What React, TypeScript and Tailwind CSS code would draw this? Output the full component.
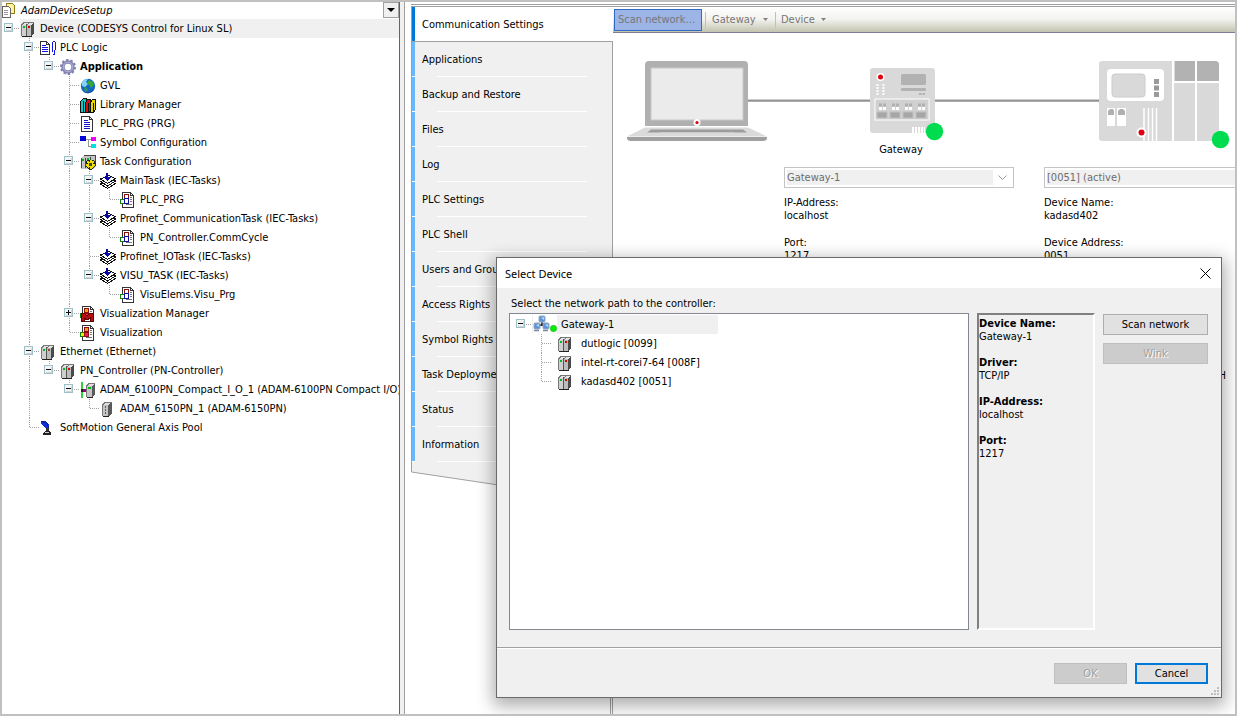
import React from "react";

const UI = "font-['DejaVu_Sans_Condensed','Noto_Sans',sans-serif]";

/* ---------- icons (16 x 16) ---------- */

type IconProps = { children: React.ReactNode; w?: number };

function Svg({ children, w = 16 }: IconProps) {
  return (
    <svg width={w} height="16" viewBox={`0 0 ${w} 16`} className="shrink-0" shapeRendering="crispEdges" aria-hidden="true">
      {children}
    </svg>
  );
}

function DeviceIcon({ red = true }: { red?: boolean }) {
  return (
    <Svg>
      <path d="M1 4l3-3h10v11l-3 3H1z" fill="#e4e4e4" />
      <path d="M11 5l3-4v11l-3 3z" fill="#4a4a4a" />
      <rect x="1" y="4" width="5" height="11" fill="#cfcfcf" />
      <rect x="7" y="4" width="4" height="11" fill="#bdbdbd" />
      <path d="M6.5 3v12" stroke="#555" />
      <path d="M1.5 4v11M4 1.5h10M1 4.5l3-3M7 4l2-2" stroke="#777" fill="none" />
      <path d="M2 15.5h10" stroke="#222" />
      <rect x="3" y="5" width="2" height="2" fill="#00c020" />
      <rect x="8" y="5" width="2" height="2" fill={red ? "#e00000" : "#a04040"} />
    </Svg>
  );
}

function ModuleIcon({ led = "column" }: { led?: "column" | "single" }) {
  return (
    <Svg>
      <path d="M2 4l3-3h7v11l-3 3H2z" fill="#dedede" />
      <path d="M8 5l3-4h1v11l-3 3H8z" fill="#5a5a5a" />
      <rect x="2" y="4" width="6" height="11" fill="#c4c4c4" />
      <path d="M2.5 4v11M5 1.5h7M2 4.5l3-3" stroke="#777" fill="none" />
      <path d="M3 15.5h6" stroke="#222" />
      {led === "column" ? (
        <path d="M5.5 5v9" stroke="#0a9a30" strokeDasharray="2 1" />
      ) : (
        <rect x="4" y="5" width="3" height="2" fill="#00b020" />
      )}
    </Svg>
  );
}

function SlaveIcon() {
  return (
    <Svg>
      <rect x="1" y="0" width="2" height="16" fill="#2fd03a" />
      <rect x="2" y="7" width="4" height="3" fill="#a0007c" />
      <rect x="1" y="7" width="2" height="3" fill="#222" />
      <path d="M6 4l3-3h6v11l-3 3H6z" fill="#dedede" />
      <path d="M12 5l3-4v11l-3 3z" fill="#5a5a5a" />
      <rect x="6" y="4" width="6" height="11" fill="#c4c4c4" />
      <path d="M6.5 4v11M9 1.5h6M6 4.5l3-3" stroke="#777" fill="none" />
      <path d="M7 15.5h6" stroke="#222" />
      <rect x="8" y="5" width="3" height="2" fill="#00c020" />
    </Svg>
  );
}

function DocIcon() {
  return (
    <Svg>
      <path d="M1.500 .5h8l3 3v12h-11z" fill="#fff" stroke="#333" />
      <path d="M9.500 .5v3h3" fill="none" stroke="#333" />
      <path d="M4 4.500h4M4 6.500h6M4 8.500h6M4 10.500h6M4 12.500h6" stroke="#1414c8" />
    </Svg>
  );
}

function PlcLogicIcon() {
  return (
    <Svg w={17}>
      <path d="M.5 1.500h6l3 3v10h-9z" fill="#fff" stroke="#333" />
      <path d="M6.500 1.500v3h3" fill="none" stroke="#333" />
      <path d="M2 5.500h4M2 7.500h6M2 9.500h6M2 11.500h6" stroke="#1414e0" />
      <path d="M12.500 2v10M15.500 2v8M13 1.500h2M14 10v4M13 14.500h2" stroke="#1414e0" fill="none" />
    </Svg>
  );
}

function GearIcon() {
  return (
    <svg width="16" height="16" viewBox="0 0 16 16" className="shrink-0" aria-hidden="true">
      <circle cx="8" cy="8" r="7" fill="none" stroke="#7d7dae" strokeWidth="2" strokeDasharray="2.400 2" />
      <circle cx="8" cy="8" r="5" fill="none" stroke="#8585b5" strokeWidth="3.400" />
      <circle cx="8" cy="8" r="4.800" fill="none" stroke="#b4b4d8" strokeWidth="1" />
    </svg>
  );
}

function GlobeIcon() {
  return (
    <svg width="16" height="16" viewBox="0 0 16 16" className="shrink-0" aria-hidden="true">
      <circle cx="8" cy="8" r="7.200" fill="#1466c8" />
      <path d="M2 4a7 7 0 0 1 6-3L6 4l2 2-3 3-3-1z" fill="#7fd4f0" />
      <path d="M9 2l4 2 1 3-3 3-2-3-2-2z" fill="#35a838" />
      <path d="M4 9l3 1 1 3-3 1z" fill="#2c9a50" />
      <path d="M1 11c3 4 9 5 13 0-1 5-10 6-13 0z" fill="#0b3b8c" />
    </svg>
  );
}

function BooksIcon() {
  return (
    <Svg>
      <path d="M.5 4.500l3-3h3v11l-2 3h-4z" fill="#10c8c8" stroke="#111" />
      <path d="M5.500 5.500l2-3h3v10l-1 3h-4z" fill="#d81010" stroke="#111" />
      <path d="M10.500 5.500l2-3h3v10l-2 3h-3z" fill="#e8d800" stroke="#111" />
      <path d="M3.500 4v11M8.500 6v9M13.500 6v9" stroke="#111" />
    </Svg>
  );
}

function SymbolIcon() {
  return (
    <Svg>
      <path d="M6 4.500h5M8.500 4v7.500h2" fill="none" stroke="#999" />
      <rect x="0" y="1" width="6" height="5" fill="#0000d8" />
      <rect x="11" y="2" width="5" height="4" fill="#f000f0" />
      <rect x="11" y="9" width="5" height="4" fill="#00e0e0" />
    </Svg>
  );
}

function TaskConfigIcon() {
  return (
    <Svg>
      <path d="M1 4l3-3h12v11l-2 3H1z" fill="#c4c4c4" />
      <path d="M1.500 4v10M5.500 4v10M10.500 3v6M4 1.500h12M15.500 1v10" stroke="#444" fill="none" />
      <rect x="2" y="5" width="2" height="2" fill="#00b020" />
      <rect x="7" y="4" width="2" height="2" fill="#00b020" />
      <path d="M10.500 5.500v10M5.500 10.500h10M7 7l7 7M14 7l-7 7" stroke="#222" strokeWidth="3" />
      <path d="M10.500 6v9M6 10.500h9M7.500 7.500l6 6M13.500 7.500l-6 6" stroke="#f0e000" strokeWidth="2" />
      <rect x="9" y="9" width="3" height="3" fill="#444" />
    </Svg>
  );
}

function TaskIcon() {
  return (
    <Svg>
      <path d="M.5 11l8-3.500 7 3-8 5z" fill="#fff" stroke="#111" />
      <path d="M.5 8.500l8-3.500 7 3-8 5z" fill="#fff" stroke="#111" />
      <path d="M.5 6l8-3.500 7 3-8 5z" fill="#fff" stroke="#111" />
      <path d="M6 0h2v4h3l-4 4-4-4h3z" fill="#0a0a9c" />
    </Svg>
  );
}

function PouCallIcon() {
  return (
    <Svg>
      <path d="M2.500 .5h8l3 3v12h-11z" fill="#fff" stroke="#333" />
      <path d="M10.500 .5v3h3" fill="none" stroke="#333" />
      <path d="M10 5.500h2M10 7.500h2M10 9.500h2M6 12.500h6" stroke="#777" />
      <rect x="4.500" y="2.500" width="4" height="4" fill="#fff" stroke="#8c1010" />
      <rect x=".5" y="7.500" width="4" height="4" fill="#fff" stroke="#108010" />
      <rect x="4.500" y="6.500" width="4" height="5" fill="#fff" stroke="#1010a0" />
    </Svg>
  );
}

function VisuIcon({ manager = false }: { manager?: boolean }) {
  return (
    <Svg>
      <path d="M2.500 .5h8l3 3v12h-11z" fill="#fff" stroke="#333" />
      <path d="M10.500 .5v3h3" fill="none" stroke="#333" />
      <path d="M10 5.500h2M10 7.500h2M10 9.500h2M6 12.500h6" stroke="#777" />
      <rect x="4.500" y="2.500" width="4" height="4" fill="#f0a020" stroke="#8c1010" />
      <rect x=".5" y="7.500" width="4" height="4" fill="#f0f000" stroke="#108010" />
      <rect x="4.500" y="7.500" width="4" height="4" fill="#f02060" stroke="#8c1010" />
      {manager && <path d="M1 15V7h3l3 3 3-3h3v8h-3v-3l-3 2-3-2v3z" fill="#b01010" stroke="#600" />}
    </Svg>
  );
}

function AxisIcon() {
  return (
    <Svg>
      <path d="M1 1h4l4 4v4H7L1 4z" fill="#1030d8" />
      <path d="M1 1l6 2 2 6" stroke="#0a1a80" fill="none" />
      <rect x="6" y="8" width="3" height="3" fill="#333" />
      <path d="M3 15v-2l3-2h3l2 2v2z" fill="#222" />
      <path d="M5 12.500h4" stroke="#ccc" />
    </Svg>
  );
}

function ProjectIcon() {
  return (
    <Svg>
      <path d="M4.500 .5h6l2 2v8h-8z" fill="#fff29a" stroke="#8a7a20" />
      <path d="M.5 3.500h6l2 2v9h-8z" fill="#fff" stroke="#666" />
      <path d="M2 7.500h4M2 9.500h4M2 11.500h4" stroke="#999" />
    </Svg>
  );
}

function GatewayIcon() {
  return (
    <svg width="26" height="19" viewBox="0 0 26 19" className="shrink-0" aria-hidden="true">
      <rect x="1" width="24" height="19" fill="#fff" />
      <path d="M10 7v4M10 9l-4 3M10 9l5 3" stroke="#222" strokeWidth="1.500" />
      <rect x="7" y="1" width="6" height="6" rx="1" fill="#5a94dc" stroke="#9aa8bc" />
      <rect x="2" y="8" width="6" height="6" rx="1" fill="#5a94dc" stroke="#9aa8bc" />
      <rect x="11" y="8" width="6" height="6" rx="1" fill="#5a94dc" stroke="#9aa8bc" />
      <path d="M2 15.500h5M11 15.500h5" stroke="#8088a0" strokeWidth="1.500" />
      <path d="M9 3l3-1v3zM4 10l3-1v3zM13 10l3-1v3z" fill="#b4d8fa" />
      <circle cx="21.500" cy="13.500" r="3.200" fill="#00f000" stroke="#30a030" strokeWidth=".5" />
    </svg>
  );
}

/* ---------- tree ---------- */

type Guide = " " | "|" | "T" | "L" | "-";
type Node = {
  label: string;
  guides: string;
  box?: "+" | "-";
  icon: React.ReactNode;
  bold?: boolean;
  selected?: boolean;
};

function GuideCell({ kind, box, label }: { kind: Guide; box?: "+" | "-"; label: string }) {
  const lines = (
    <svg width="20" height="19" viewBox="0 0 20 19" shapeRendering="crispEdges" aria-hidden="true" className="block">
      <g stroke="#a0a0a0" strokeDasharray="1 1">
        {(kind === "|" || kind === "T") && <path d="M9.500 0v19" />}
        {kind === "L" && <path d="M9.500 0v10" />}
        {kind !== " " && kind !== "|" && <path d="M10 9.500h9" />}
      </g>
      {box && (
        <g>
          <rect x="4.500" y="4.500" width="8" height="8" fill="#f4f4f4" stroke="#9fc0c8" />
          <path d="M6 11.500h6M11.500 6v6" stroke="#d4d4d4" />
          <path d="M6 8.500h5" stroke="#111" />
          {box === "+" && <path d="M8.500 6v5" stroke="#111" />}
        </g>
      )}
    </svg>
  );
  return box ? (
    <button type="button" aria-label={`${box === "+" ? "Expand" : "Collapse"} ${label}`} className="shrink-0">
      {lines}
    </button>
  ) : (
    <span className="shrink-0">{lines}</span>
  );
}

const projectTree: Node[] = [
  { label: "Device (CODESYS Control for Linux SL)", guides: "-", box: "-", icon: <DeviceIcon />, selected: true },
  { label: "PLC Logic", guides: " T", box: "-", icon: <PlcLogicIcon /> },
  { label: "Application", guides: " |L", box: "-", icon: <GearIcon />, bold: true },
  { label: "GVL", guides: " | T", icon: <GlobeIcon /> },
  { label: "Library Manager", guides: " | T", icon: <BooksIcon /> },
  { label: "PLC_PRG (PRG)", guides: " | T", icon: <DocIcon /> },
  { label: "Symbol Configuration", guides: " | T", icon: <SymbolIcon /> },
  { label: "Task Configuration", guides: " | T", box: "-", icon: <TaskConfigIcon /> },
  { label: "MainTask (IEC-Tasks)", guides: " | |T", box: "-", icon: <TaskIcon /> },
  { label: "PLC_PRG", guides: " | ||L", icon: <PouCallIcon /> },
  { label: "Profinet_CommunicationTask (IEC-Tasks)", guides: " | |T", box: "-", icon: <TaskIcon /> },
  { label: "PN_Controller.CommCycle", guides: " | ||L", icon: <PouCallIcon /> },
  { label: "Profinet_IOTask (IEC-Tasks)", guides: " | |T", icon: <TaskIcon /> },
  { label: "VISU_TASK (IEC-Tasks)", guides: " | |L", box: "-", icon: <TaskIcon /> },
  { label: "VisuElems.Visu_Prg", guides: " | | L", icon: <PouCallIcon /> },
  { label: "Visualization Manager", guides: " | T", box: "+", icon: <VisuIcon manager /> },
  { label: "Visualization", guides: " | L", icon: <VisuIcon /> },
  { label: "Ethernet (Ethernet)", guides: " T", box: "-", icon: <DeviceIcon red={false} /> },
  { label: "PN_Controller (PN-Controller)", guides: " |L", box: "-", icon: <DeviceIcon /> },
  { label: "ADAM_6100PN_Compact_I_O_1 (ADAM-6100PN Compact I/O)", guides: " | L", box: "-", icon: <SlaveIcon /> },
  { label: "ADAM_6150PN_1 (ADAM-6150PN)", guides: " |  L", icon: <ModuleIcon /> },
  { label: "SoftMotion General Axis Pool", guides: " L", icon: <AxisIcon /> },
];

function TreeRow({ node }: { node: Node }) {
  const cells = node.guides.split("") as Guide[];
  return (
    <li role="treeitem" aria-selected={!!node.selected} className="flex h-[19px]">
      {cells.map((c, i) => (
        <GuideCell key={i} kind={c} box={i === cells.length - 1 ? node.box : undefined} label={node.label} />
      ))}
      <span className={`flex min-w-0 flex-1 items-center ${node.selected ? "bg-[#f0f0f0]" : ""}`}>
        <span className="flex w-5 shrink-0">{node.icon}</span>
        <span className={`whitespace-nowrap ${node.bold ? "font-bold" : ""}`}>{node.label}</span>
      </span>
    </li>
  );
}

function ProjectPanel() {
  return (
    <aside className="w-[398px] shrink-0 overflow-hidden border-r border-[#646464] bg-white">
      <div className="flex h-[17px] items-center">
        <span className="flex w-[19px] shrink-0"><ProjectIcon /></span>
        <span className="flex-1 italic">AdamDeviceSetup</span>
        <button type="button" aria-label="Project menu" className="flex h-4 w-4 items-center justify-center self-start border border-[#a0a0a0] bg-[#f0f0f0]">
          <svg width="8" height="4" viewBox="0 0 8 4" aria-hidden="true"><path d="M0 0h8L4 4z" fill="#000" /></svg>
        </button>
      </div>
      <ul role="tree" aria-label="Devices" className="-ml-0.5">
        {projectTree.map((n, i) => <TreeRow key={i} node={n} />)}
      </ul>
    </aside>
  );
}

/* ---------- editor ---------- */

const tabs = [
  "Applications", "Backup and Restore", "Files", "Log", "PLC Settings", "PLC Shell",
  "Users and Groups", "Access Rights", "Symbol Rights", "Task Deployment", "Status", "Information",
];

function TabStrip() {
  return (
    <nav aria-label="Device pages" className="flex w-[202px] shrink-0 flex-col">
      <button type="button" className="flex h-[34px] items-center border-l border-[#a0a0a0] bg-white text-left">
        <span className="h-full w-[3px] bg-[#0078d7]" />
        <span className="pl-[7px]">Communication Settings</span>
      </button>
      <div className="flex flex-col border-x border-t border-[#a0a0a0] bg-[#f0f0f0]">
        {tabs.map((t) => (
          <button key={t} type="button" className="flex h-[35px] items-stretch text-left">
            <span className="w-[3px] border-b border-white bg-[#69b8fb]" />
            <span className="flex flex-1 flex-col pl-[7px]">
              <span className="flex flex-1 items-center">{t}</span>
              <span className="mr-[25px] ml-[15px] h-px bg-white" />
            </span>
          </button>
        ))}
      </div>
      <svg width="202" height="41" viewBox="0 0 202 41" aria-hidden="true" className="shrink-0">
        <path d="M.5 0v10l201 30V0z" fill="#f0f0f0" />
        <path d="M.5 0v10l201 30V0" fill="none" stroke="#a0a0a0" />
      </svg>
      <div className="w-[3px] flex-1 self-end border-x border-[#a0a0a0]" />
    </nav>
  );
}

function Caret() {
  return (
    <svg width="5" height="3" viewBox="0 0 5 3" aria-hidden="true"><path d="M0 0h5L2.500 3z" fill="#808080" /></svg>
  );
}

function Toolbar() {
  return (
    <div className="flex h-[26px] items-center border-b border-[#7d7d96] bg-linear-to-b from-white via-[#f2f2ee] to-[#c3c3af] pl-px text-[#76767a]">
      <button type="button" className="h-[22px] w-[88px] border border-[#316ac5] bg-[#9cb4e6] pl-[3px] text-left">Scan network…</button>
      <span className="ml-[3px] h-4 w-px bg-[#c0c0b8]" />
      <button type="button" className="flex w-[69px] items-center justify-between pr-[7px] pl-1.5">Gateway <Caret /></button>
      <span className="h-4 w-px bg-[#c0c0b8]" />
      <button type="button" className="flex w-[57px] items-center justify-between pr-[7px] pl-[5px]">Device <Caret /></button>
    </div>
  );
}

function NetworkDiagram() {
  return (
    <svg width="622" height="110" viewBox="613 33 622 110" className="block overflow-visible" role="img" aria-label="Network path: computer, gateway, device">
      <path d="M748 100h122M935 100h164" stroke="#9a9a9a" />
      <path d="M748 101h122M935 101h164" stroke="#5a5a5a" />
      <path d="M645 126V65q0-4 4-4h95q4 0 4 4v61z" fill="#b0b0b0" />
      <rect x="651" y="68" width="92" height="52" fill="#ebebeb" stroke="#c8c8c8" />
      <circle cx="697" cy="122.500" r="3.500" fill="#fff" />
      <circle cx="697" cy="122.500" r="1.600" fill="#e00010" />
      <path d="M645 127.500h103l19 9H627z" fill="#dadada" />
      <path d="M651 129.500h92l4 3H647z" fill="#9c9c9c" />
      <path d="M660 132.500h74l1 1H659z" fill="#dadada" />
      <path d="M627 137h140v1q0 3-4 3H631q-4 0-4-3z" fill="#a0a0a0" />

      <rect x="870" y="68" width="65" height="65" rx="3" fill="#d9d9d9" />
      <circle cx="880.500" cy="77" r="4" fill="#fff" />
      <circle cx="880.500" cy="77" r="2.500" fill="#e00010" />
      <path d="M877.500 84v12M883.500 84v12" stroke="#fff" strokeWidth="2" strokeDasharray="2 1" />
      <rect x="901" y="74" width="25" height="11" rx="1.500" fill="#b2b2b2" />
      <rect x="901" y="88" width="25" height="3" rx="1" fill="#b2b2b2" />
      <path d="M919 94h6" stroke="#b2b2b2" strokeWidth="2" strokeDasharray="2.500 1" />
      <rect x="875" y="99" width="54" height="21" fill="#d0d0d0" stroke="#fff" />
      {[877, 890, 903, 916].map((x) => (
        <g key={x}>
          <path d={`M${x + 2} 105h8`} stroke="#b0b0b0" strokeWidth="3" strokeDasharray="3 1" />
          <path d={`M${x + 2} 108.500h8`} stroke="#fff" strokeWidth="3" strokeDasharray="3 1" />
          <rect x={x} y="112" width="10" height="6" fill="#a6a6a6" stroke="#c0c0c0" />
        </g>
      ))}
      <path d="M912 130h13" stroke="#fff" strokeWidth="6" strokeDasharray="2 1" />
      <circle cx="934.500" cy="131.500" r="8.700" fill="#00dc50" />

      <path d="M1099 64q0-3 3-3h113q4 0 4 4v73q0 3-3 3h-114q-3 0-3-3z" fill="#d9d9d9" />
      <path d="M1175 61h20v20h-20zM1197 61h18q4 0 4 4v16h-22z" fill="#b2b2b2" />
      <path d="M1173 61v80M1196 61v80" stroke="#fff" strokeWidth="2" />
      <path d="M1174 82h45" stroke="#fff" strokeWidth="2" />
      <rect x="1107" y="69" width="57" height="32" rx="4" fill="#fff" />
      <rect x="1112" y="74" width="33" height="23" rx="3" fill="#d9d9d9" stroke="#ccc" />
      <path d="M1154 79h5v5h-5zM1154 85.500h5v5h-5zM1154 92h5v5h-5z" fill="#9a9a9a" />
      <path d="M1107 108h8v18h-8zM1117 108h9v18h-9z" fill="#fff" />
      <path d="M1108 111l2-2h3l1 2v4h-6zM1118 111l2-2h3l2 2v4h-7z" fill="#b0b0b0" />
      <path d="M1144 108v33M1148.500 108v33M1152.500 108v33M1156.500 108v33" stroke="#fff" strokeWidth="1.500" />
      <circle cx="1141.500" cy="132.500" r="5" fill="#fff" />
      <circle cx="1141.500" cy="132.500" r="3" fill="#e00010" />
      <circle cx="1220.500" cy="139.500" r="8.700" fill="#00dc50" />
    </svg>
  );
}

function Combo({ label, value }: { label: string; value: string }) {
  return (
    <div className="flex h-[21px] border border-[#c4c4c4] bg-white p-0.5">
      <select aria-label={label} disabled className="min-w-0 flex-1 appearance-none bg-[#f0f0f0] text-[#6d6d6d] opacity-100">
        <option>{value}</option>
      </select>
      <span className="flex w-[18px] items-center justify-center">
        <svg width="9" height="5" viewBox="0 0 9 5" aria-hidden="true"><path d="M.5 .5l4 4 4-4" fill="none" stroke="#9a9a9a" /></svg>
      </span>
    </div>
  );
}

function Facts({ rows }: { rows: [string, string][] }) {
  return (
    <dl className="mt-2 flex flex-col gap-3.5 leading-[13px] whitespace-nowrap">
      {rows.map(([k, v]) => (
        <div key={k}><dt>{k}</dt><dd>{v}</dd></div>
      ))}
    </dl>
  );
}

function CommunicationPage() {
  return (
    <section className="min-w-0 flex-1 overflow-hidden">
      <Toolbar />
      <NetworkDiagram />
      <p className="w-[576px] text-center leading-[13px]">Gateway</p>
      <div className="mt-[11px] flex gap-[30px] pl-[171px]">
        <div className="w-[230px] shrink-0">
          <Combo label="Gateway" value="Gateway-1" />
          <Facts rows={[["IP-Address:", "localhost"], ["Port:", "1217"]]} />
        </div>
        <div className="w-[230px] shrink-0">
          <Combo label="Device" value="[0051] (active)" />
          <Facts
            rows={[
              ["Device Name:", "kadasd402"],
              ["Device Address:", "0051"],
              ["Target ID:", "0000 0010"],
              ["Target Type:", "4096"],
              ["Target Vendor:", "3S - Smart Software Solutions GmbH"],
            ]}
          />
        </div>
      </div>
    </section>
  );
}

/* ---------- dialog ---------- */

const devices = ["dutlogic [0099]", "intel-rt-corei7-64 [008F]", "kadasd402 [0051]"];

function SelectDeviceDialog() {
  return (
    <div role="dialog" aria-labelledby="dialog-title" className="absolute top-[255px] left-[494px] flex w-[726px] flex-col border border-[#6a6a6a] bg-[#f0f0f0] shadow-[0_5px_16px_3px_rgba(0,0,0,0.32)]">
      <header className="flex h-[30px] items-center justify-between bg-white pr-2.5 pl-2">
        <h2 id="dialog-title" className="font-['Noto_Sans',sans-serif] text-[11px]">Select Device</h2>
        <button type="button" aria-label="Close">
          <svg width="11" height="11" viewBox="0 0 11 11" aria-hidden="true"><path d="M.5 .5l10 10M10.500 .5l-10 10" stroke="#000" /></svg>
        </button>
      </header>
      <div className="pt-2 pr-[13px] pl-3">
        <p className="pl-0.5 leading-4">Select the network path to the controller:</p>
        <div className="mt-px flex h-[317px] gap-2">
          <ul role="tree" aria-label="Network devices" className="min-w-0 flex-1 border border-[#828790] bg-white pt-px pl-0.5">
            <li role="treeitem" aria-selected="true" className="flex h-[19px]">
              <GuideCell kind="-" box="-" label="Gateway-1" />
              <span className="flex w-[186px] items-center gap-[3px] bg-[#f0f0f0]"><GatewayIcon />Gateway-1</span>
            </li>
            {devices.map((d, i) => (
              <li key={d} role="treeitem" aria-selected="false" className="flex h-[19px] items-center">
                <GuideCell kind=" " label={d} />
                <GuideCell kind={i === devices.length - 1 ? "L" : "T"} label={d} />
                <span className="flex w-[29px] shrink-0 pl-[5px]"><DeviceIcon /></span>
                <span className="whitespace-nowrap">{d}</span>
              </li>
            ))}
          </ul>
          <dl className="flex w-[118px] flex-col gap-[13px] border-2 border-t-[#808080] border-r-white border-b-white border-l-[#808080] pt-0.5 leading-[13px]">
            {[["Device Name:", "Gateway-1"], ["Driver:", "TCP/IP"], ["IP-Address:", "localhost"], ["Port:", "1217"]].map(([k, v]) => (
              <div key={k}><dt className="font-bold">{k}</dt><dd>{v}</dd></div>
            ))}
          </dl>
          <div className="flex w-[105px] flex-col gap-2 pt-px">
            <button type="button" className="h-[21px] border border-[#adadad] bg-[#e1e1e1]">Scan network</button>
            <button type="button" disabled className="h-[21px] border border-[#bfbfbf] bg-[#cccccc] text-[#a0a0a0] [text-shadow:1px_1px_0_#fff]">Wink</button>
          </div>
        </div>
      </div>
      <footer className="mt-[17px] border-t border-[#a0a0a0]">
        <div className="flex justify-end gap-2 border-t border-white pt-3.5 pr-[13px] pb-[13px]">
          <button type="button" disabled className="h-[21px] w-[73px] border border-[#bfbfbf] bg-[#cccccc] text-[#a0a0a0] [text-shadow:1px_1px_0_#fff]">OK</button>
          <button type="button" className="h-[21px] w-[73px] border-2 border-[#0078d7] bg-[#e1e1e1]">Cancel</button>
        </div>
      </footer>
      <svg width="8" height="8" viewBox="0 0 8 8" shapeRendering="crispEdges" className="absolute right-0.5 bottom-0.5" aria-hidden="true">
        <path d="M6 0h2v2H6zM6 3h2v2H6zM3 3h2v2H3zM6 6h2v2H6zM3 6h2v2H3zM0 6h2v2H0z" fill="#bfbfbf" />
      </svg>
    </div>
  );
}

export default function App() {
  return (
    <div className={`relative flex min-h-screen overflow-hidden border-2 border-[#c0c0c0] bg-white text-[11px] leading-[13px] text-black ${UI}`}>
      <ProjectPanel />
      <div className="w-1 shrink-0 bg-[#f0f0f0]" />
      <main className="flex min-w-0 flex-1 flex-col border-l border-[#a0a0a0] pt-0.5 pl-1.5">
        <div className="h-[3px] shrink-0 border-y border-[#a0a0a0]" />
        <div className="flex flex-1">
          <TabStrip />
          <CommunicationPage />
        </div>
      </main>
      <SelectDeviceDialog />
    </div>
  );
}
